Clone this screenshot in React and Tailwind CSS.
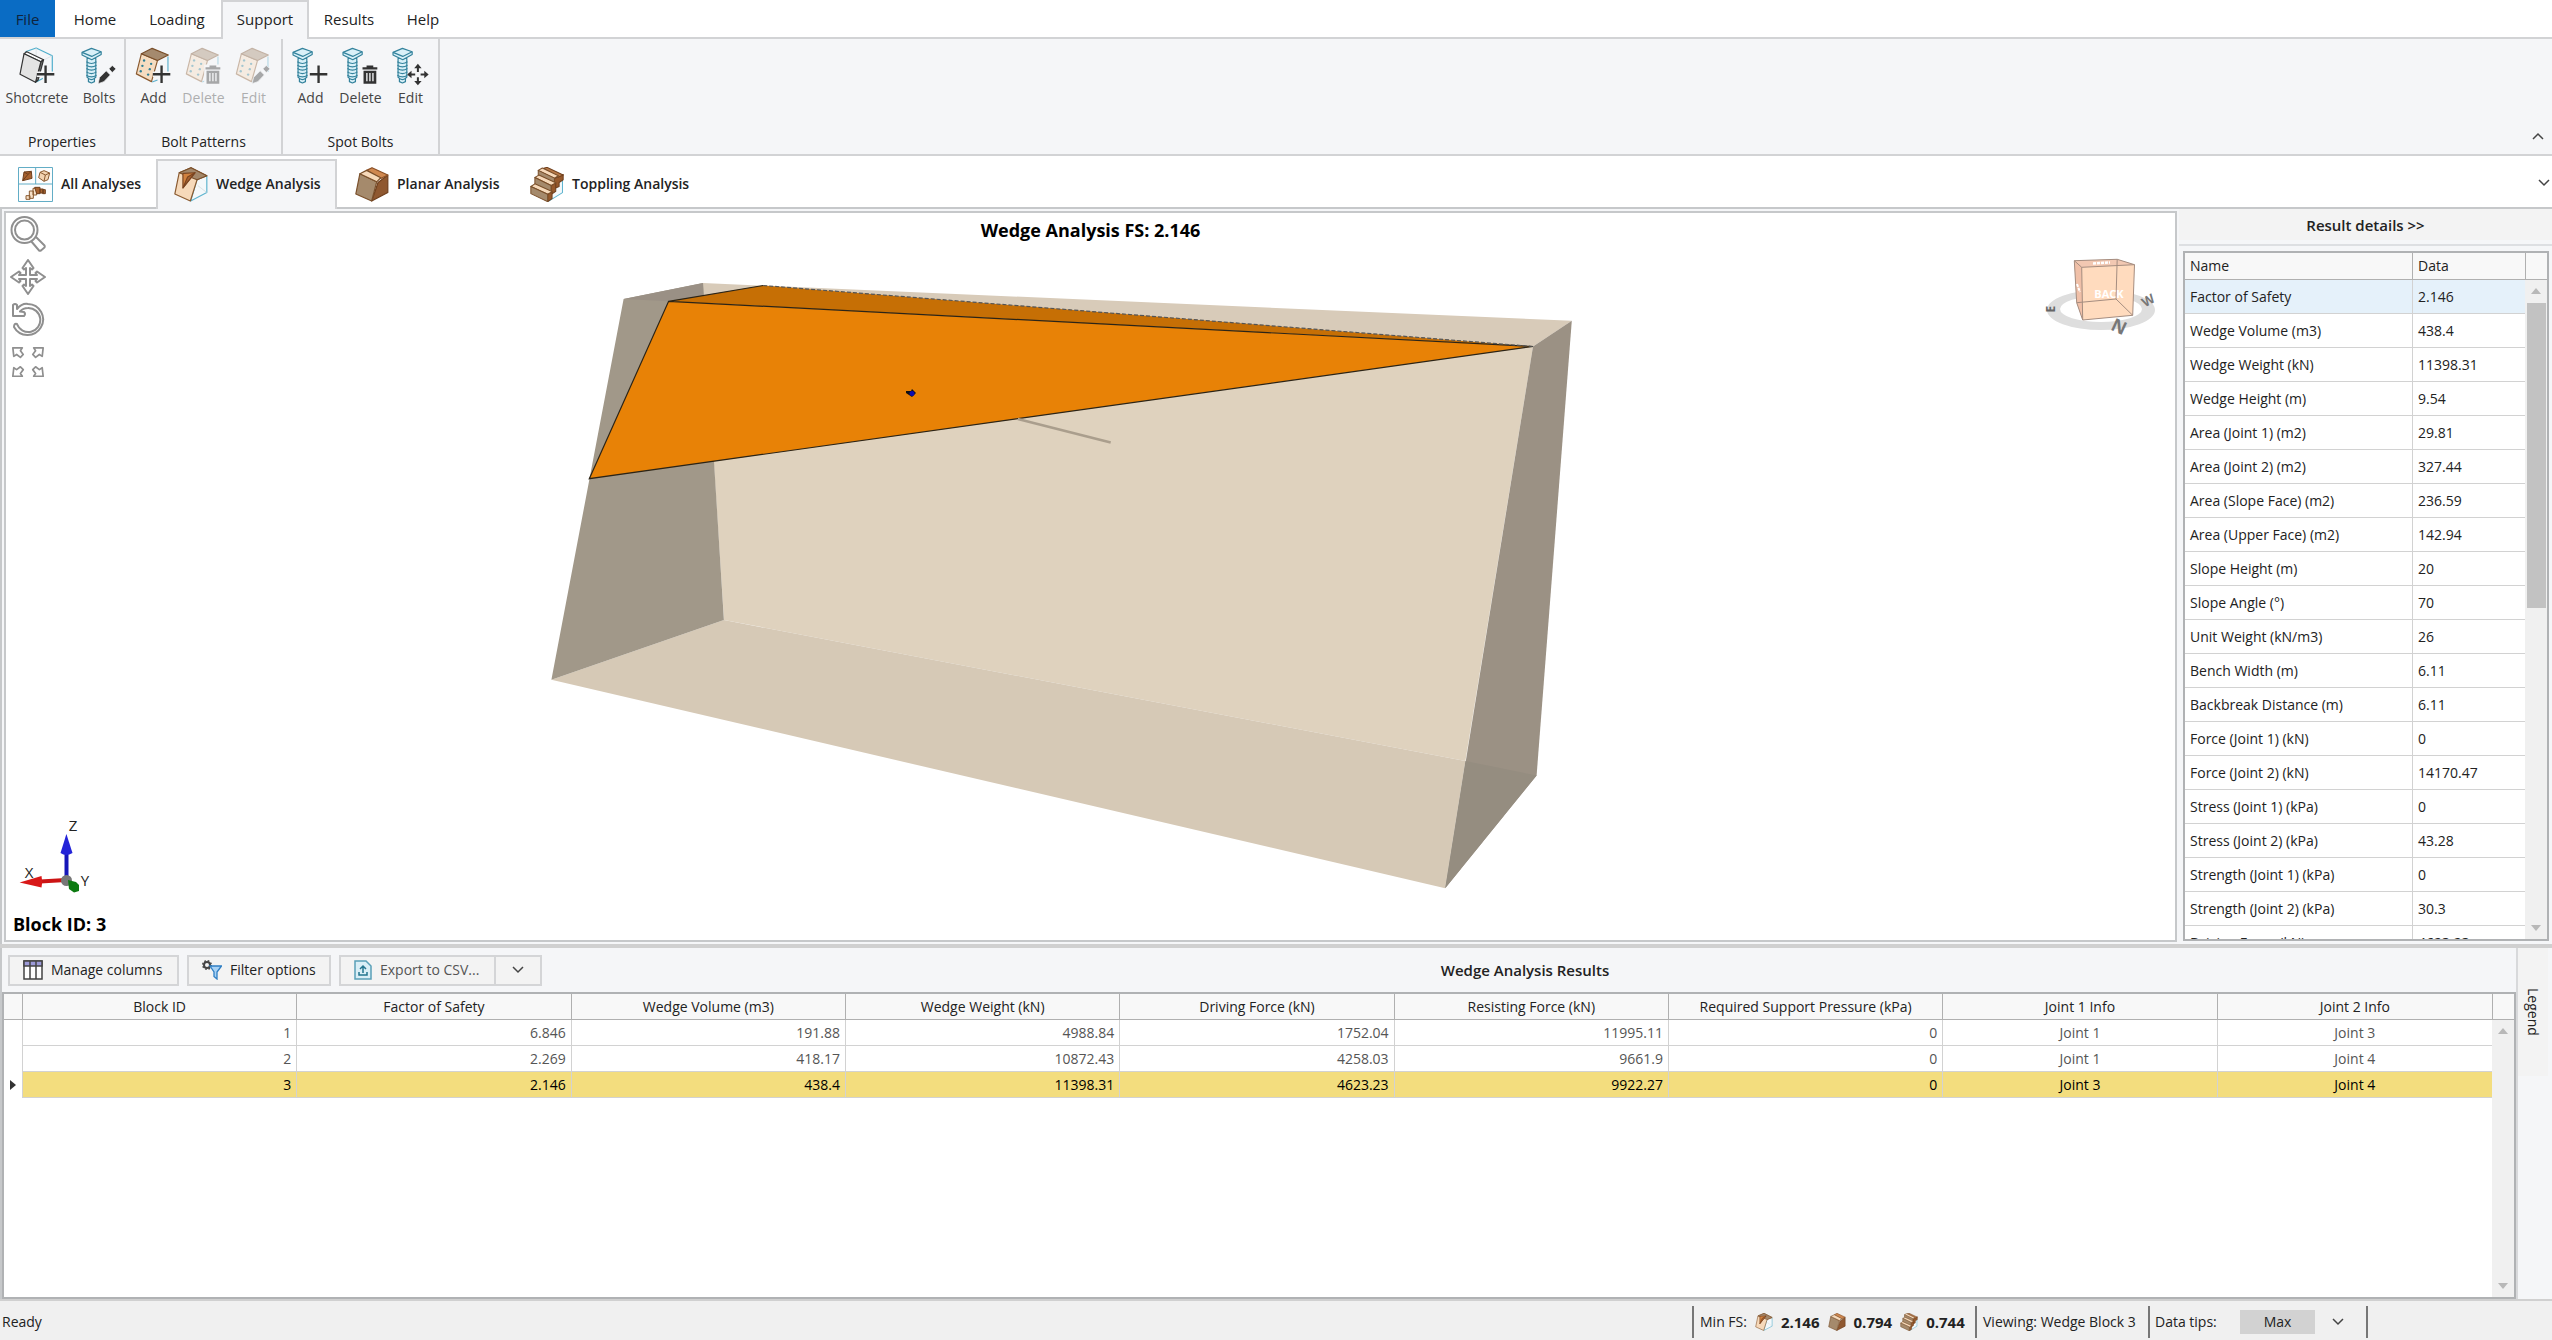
import { useState } from "react";
import clsx from "clsx";

const menuTabs = [
  { label: "Home", width: "w-[76px]" },
  { label: "Loading", width: "w-[88px]" },
  { label: "Support", width: "w-[88px]" },
  { label: "Results", width: "w-[80px]" },
  { label: "Help", width: "w-[68px]" },
];

const details = [
  ["Factor of Safety", "2.146"],
  ["Wedge Volume (m3)", "438.4"],
  ["Wedge Weight (kN)", "11398.31"],
  ["Wedge Height (m)", "9.54"],
  ["Area (Joint 1) (m2)", "29.81"],
  ["Area (Joint 2) (m2)", "327.44"],
  ["Area (Slope Face) (m2)", "236.59"],
  ["Area (Upper Face) (m2)", "142.94"],
  ["Slope Height (m)", "20"],
  ["Slope Angle (°)", "70"],
  ["Unit Weight (kN/m3)", "26"],
  ["Bench Width (m)", "6.11"],
  ["Backbreak Distance (m)", "6.11"],
  ["Force (Joint 1) (kN)", "0"],
  ["Force (Joint 2) (kN)", "14170.47"],
  ["Stress (Joint 1) (kPa)", "0"],
  ["Stress (Joint 2) (kPa)", "43.28"],
  ["Strength (Joint 1) (kPa)", "0"],
  ["Strength (Joint 2) (kPa)", "30.3"],
  ["Driving Force (kN)", "4623.23"],
];

const resultColumns = [
  "Block ID",
  "Factor of Safety",
  "Wedge Volume (m3)",
  "Wedge Weight (kN)",
  "Driving Force (kN)",
  "Resisting Force (kN)",
  "Required Support Pressure (kPa)",
  "Joint 1 Info",
  "Joint 2 Info",
];

const resultRows = [
  ["1", "6.846", "191.88", "4988.84", "1752.04", "11995.11", "0", "Joint 1", "Joint 3"],
  ["2", "2.269", "418.17", "10872.43", "4258.03", "9661.9", "0", "Joint 1", "Joint 4"],
  ["3", "2.146", "438.4", "11398.31", "4623.23", "9922.27", "0", "Joint 3", "Joint 4"],
];

/* ---------- icons ---------- */

function Plus() {
  return (
    <g fill="none">
      <path d="M52 81H104M78 55V107" stroke="#f5f6f8" strokeWidth="16" />
      <path d="M52 81H104M78 55V107" stroke="#333" strokeWidth="7" />
    </g>
  );
}

function Pencil() {
  return (
    <g fill="#333" stroke="#f5f6f8" strokeWidth="2">
      <path d="M50 109L54 91L74 71L86 83L67 103Z" />
      <path d="M82 65L92 55L103 65L92 76Z" />
    </g>
  );
}

function Trash() {
  return (
    <g>
      <path d="M56 52H108V112H56Z" fill="#f5f6f8" />
      <path
        fillRule="evenodd"
        fill="#333"
        d="M60 60H72V55H92V60H104V67H60ZM63 71H101V109H63ZM71 77V102H75V77ZM80 77V102H84V77ZM89 77V102H93V77Z"
      />
    </g>
  );
}

function MoveArrows() {
  return (
    <g>
      <path d="M44 82L76 50L108 82L76 114Z" fill="#f5f6f8" />
      <path
        fill="#333"
        d="M76 50L87 63H79V74H73V63H65ZM76 114L87 101H79V90H73V101H65ZM44 82L57 71V79H68V85H57V93ZM108 82L95 71V79H84V85H95V93Z"
      />
    </g>
  );
}

function Bolt() {
  return (
    <g stroke="#33829c" strokeWidth="3.5" strokeLinejoin="round" fill="#d9f0f8">
      <path d="M17 34H43V90L39 93V103L30 107L21 103V93L17 90Z" />
      <path
        d="M15 44Q30 54 45 44M15 54Q30 64 45 54M15 64Q30 74 45 64M15 74Q30 84 45 74M15 84Q30 94 45 84M21 94Q30 100 39 94"
        fill="none"
      />
      <path d="M2 16L30 4L59 14V22L31 38L2 24Z" />
      <path d="M2 16L31 28L59 14" fill="none" />
    </g>
  );
}

function PatternBlock() {
  return (
    <g strokeLinejoin="round" strokeWidth="3.5">
      <path d="M97 28V74M66 98L50 104" stroke="#5fb0cc" fill="none" />
      <path d="M18 20L66 40L48 103L3 80Z" fill="#f6dcc0" stroke="#8a5a30" />
      <path d="M18 20L50 4L98 24L66 40Z" fill="#a58a6e" stroke="#7a4f2a" />
      <g fill="#2d7f95">
        <circle cx="26" cy="40" r="3.5" />
        <circle cx="47" cy="50" r="3.5" />
        <circle cx="21" cy="56" r="3.5" />
        <circle cx="43" cy="66" r="3.5" />
        <circle cx="16" cy="72" r="3.5" />
        <circle cx="38" cy="82" r="3.5" />
      </g>
    </g>
  );
}

function ShotcreteBlock() {
  return (
    <g strokeLinejoin="round" strokeWidth="3.5">
      <path d="M18 14L50 3L98 26V78L50 104" stroke="#4faecb" fill="none" />
      <path d="M50 3V48M98 26L70 40M50 48L90 72" stroke="#d5dde2" strokeWidth="2" fill="none" />
      <path d="M14 20L22 14L72 38L64 44Z" fill="#fff" stroke="#333" />
      <path d="M64 44L72 38L56 98L48 105Z" fill="#777" stroke="#333" />
      <path d="M14 20L64 44L48 105L2 81Z" fill="#e3e3e3" stroke="#333" />
    </g>
  );
}

function RibbonIcon({ children }) {
  return (
    <svg viewBox="-1 0 110 116" className="h-[39px] w-[37px]">
      {children}
    </svg>
  );
}

function WedgeIcon({ className }) {
  return (
    <svg viewBox="0 0 100 104" className={className} strokeLinejoin="round" strokeWidth="3.5">
      <path d="M97 27V76L49 101L70 30" fill="#f4f8fa" stroke="#5fb4cf" />
      <path d="M70 55L97 76" stroke="#ccd6da" strokeWidth="2" />
      <path d="M15 17L50 2L97 26L68 38L48 101L2 80Z" fill="#f6d9ba" stroke="#8a5a30" />
      <path d="M15 17L50 2L97 26L68 38Z" fill="#a3876a" stroke="#7a4f2a" />
      <path d="M26 19L62 17L26 62Z" fill="#d1813f" stroke="#7a4420" />
      <path d="M62 17L26 62L40 30Z" fill="#a8622f" stroke="#7a4420" />
    </svg>
  );
}

function PlanarIcon({ className }) {
  return (
    <svg viewBox="0 0 100 104" className={className} strokeLinejoin="round" strokeWidth="3.5">
      <path d="M68 46L97 24V76L49 101Z" fill="#8f5830" stroke="#6e3f1d" />
      <path d="M14 20L64 44L49 101L2 80Z" fill="#a58a6c" stroke="#7a4f2a" />
      <path d="M34 10L50 2L97 24L76 34Z" fill="#cf8850" stroke="#8a4f25" />
      <path d="M14 20L34 10L76 32L64 44Z" fill="#f6d9ba" stroke="#7a4f2a" />
    </svg>
  );
}

function TopplingIcon({ className }) {
  return (
    <svg viewBox="0 0 100 104" className={className} strokeLinejoin="round" strokeWidth="3">
      <path d="M96 34V76L54 102" fill="#f4f8fa" stroke="#5fb4cf" />
      <path d="M72 34L98 22V38L86 46V58L72 64Z" fill="#96592c" stroke="#6e3f1d" />
      <path d="M40 4L50 1L98 24L84 30Z" fill="#b87a48" stroke="#6e3f1d" />
      <path d="M24 10L36 3L84 26L72 33Z" fill="#f6d9ba" stroke="#7a4f2a" />
      <path d="M24 10L72 33V52L24 28Z" fill="#a58a6c" stroke="#7a4f2a" />
      <path d="M62 55L76 47V72L62 82Z" fill="#96592c" stroke="#6e3f1d" />
      <path d="M14 31L26 24L76 47L62 55Z" fill="#f6d9ba" stroke="#7a4f2a" />
      <path d="M14 31L62 55V78L14 54Z" fill="#a58a6c" stroke="#7a4f2a" />
      <path d="M52 81L65 73V94L52 103Z" fill="#96592c" stroke="#6e3f1d" />
      <path d="M2 58L14 50L65 73L52 81Z" fill="#f6d9ba" stroke="#7a4f2a" />
      <path d="M2 58L52 81V103L2 79Z" fill="#a58a6c" stroke="#7a4f2a" />
    </svg>
  );
}

function AllAnalysesIcon() {
  return (
    <svg viewBox="0 0 105 105" className="size-[35px]" strokeLinejoin="round" strokeWidth="3">
      <path d="M1.5 1.5H103.5V103.5H1.5ZM1.5 51H103.5M53 1.5V51" fill="#fdfdfd" stroke="#62adc6" />
      <path d="M18 15L40 13L42 34L14 41Z" fill="#a8622f" stroke="#6e3f1d" />
      <path d="M18 15L30 22L14 41M30 22L40 13" fill="none" stroke="#6e3f1d" />
      <path d="M66 16L78 11L95 18L90 38L78 43L62 32Z" fill="#f3d4b2" stroke="#8a5a30" />
      <path d="M66 16L82 24L78 43M82 24L95 18" fill="none" stroke="#8a5a30" />
      <path d="M24 86H36V97H24ZM34 72H46V94H34ZM45 64H56V84H45Z" fill="#f6e0c8" stroke="#8a5a30" />
      <path d="M50 61H66V80H56ZM66 66H76V78H66ZM74 68H82V80H74Z" fill="#a8622f" stroke="#6e3f1d" />
    </svg>
  );
}

function ZoomTool() {
  return (
    <svg viewBox="0 0 36 36" className="size-9" fill="none" stroke="#8f8f8f" strokeWidth="2">
      <circle cx="14.5" cy="14" r="13" />
      <circle cx="14.5" cy="14" r="9.5" />
      <path d="M21 25L29 34.500Q30 35 31 34.500L34.500 31.500Q35 30 34.500 29.500L25.500 20.500" />
    </svg>
  );
}

function PanTool() {
  return (
    <svg viewBox="0 0 36 36" className="size-9" fill="none" stroke="#8f8f8f" strokeWidth="2" strokeLinejoin="round">
      <path d="M18 1L23.500 9L22 10.500L20 9V16H27L25.500 14L27 12.500L35 18L27 23.500L25.500 22L27 20H20V27L22 25.500L23.500 27L18 35L12.500 27L14 25.500L16 27V20H9L10.500 22L9 23.500L1 18L9 12.500L10.500 14L9 16H16V9L14 10.500L12.500 9Z" />
    </svg>
  );
}

function ResetTool() {
  return (
    <svg viewBox="0 0 36 36" className="size-9" fill="none" stroke="#8f8f8f" strokeWidth="2" strokeLinejoin="round">
      <path d="M3 14V3Q5 1 7 3V7Q12 1 18 2A15.500 15.500 0 1 1 4 25Q4 21 7 22A12 12 0 1 0 18 6Q13 6 10 9.500L14 10Q16 12 14 14Z" />
    </svg>
  );
}

function FitTool() {
  return (
    <svg viewBox="-1 0 38 38" className="size-9" fill="none" stroke="#8f8f8f" strokeWidth="1.8" strokeLinejoin="round">
      <path d="M2 3H12L10 6L13 10L10 13L6 10L3 12Z" />
      <path d="M34 3H24L26 6L23 10L26 13L30 10L33 12Z" />
      <path d="M2 33H12L10 30L13 26L10 23L6 26L3 24Z" />
      <path d="M34 33H24L26 30L23 26L26 23L30 26L33 24Z" />
    </svg>
  );
}

function Chevron({ up }) {
  return (
    <svg viewBox="0 0 12 8" className={clsx("h-2 w-3", up && "rotate-180")} fill="none" stroke="#444" strokeWidth="1.5">
      <path d="M1 1L6 6L11 1" />
    </svg>
  );
}

function Triangle({ up }) {
  return (
    <svg viewBox="0 0 10 6" className={clsx("h-[6px] w-[10px]", !up && "rotate-180")} fill="#b8b8b8">
      <path d="M5 0L10 6H0Z" />
    </svg>
  );
}

/* ---------- ribbon ---------- */

function RibbonButton({ label, disabled, width = "w-[50px]", children }) {
  return (
    <button
      disabled={disabled}
      className={clsx("flex flex-col items-center gap-[2px] whitespace-nowrap text-[#444]", width, disabled && "opacity-40")}
    >
      <RibbonIcon>{children}</RibbonIcon>
      <span>{label}</span>
    </button>
  );
}

function RibbonGroup({ title, width, children }) {
  return (
    <section className={clsx("flex flex-col justify-between border-r-2 border-[#d2d3d5] pt-[8px]", width)}>
      <div className="flex justify-center">{children}</div>
      <h2 className="pb-[2px] text-center">{title}</h2>
    </section>
  );
}

/* ---------- 3D view ---------- */

function Scene() {
  return (
    <svg viewBox="6 213 2169 727" className="absolute inset-0 h-full w-full">
      {/* slope block */}
      <path d="M703 283L1571.800 320.800L1533 346.500L703 300Z" fill="#d8cbb9" />
      <path d="M668.600 301.300L1533 346.500L1465.400 761L724 620L703 295Z" fill="#dfd2be" />
      <path d="M551.400 679.700L723.900 620L1465.400 761L1445.200 888.200Z" fill="#d6c9b6" />
      <path d="M623.600 299L703 283L703.600 295L723.900 620L551.400 679.700Z" fill="#a19889" />
      <path d="M623.600 299L703 283L703.600 295L668.600 301.300Z" fill="#9a9085" />
      <path d="M1571.800 320.800L1536.600 775.500L1445.200 888.200L1533 346.500Z" fill="#9b9184" />
      <path d="M1465.400 761L1536.600 775.500L1445.200 888.200Z" fill="#958d80" />

      {/* wedge */}
      <path d="M668.600 301.300L763.200 285.500L1533 346.500Z" fill="#c66f05" />
      <path d="M668.600 301.300L1533 346.500L589.300 478.700Z" fill="#e88206" />
      <g fill="none" stroke="#2b2417" strokeWidth="1.2">
        <path d="M668.600 301.300L1533 346.500L589.300 478.700ZM668.600 301.300L763.200 285.500" />
        <path d="M763.200 285.500L1533 346.500" strokeDasharray="4 2" stroke="#555" />
      </g>
      <path d="M1017.800 419L1110.700 442.500" stroke="#aa9e8d" strokeWidth="2.500" />
      <path d="M906 391L911 391L912 389L916 393L912 397L906 393Z" fill="#101010" />
      <circle cx="912" cy="393.500" r="2.500" fill="#0c0cb0" />

      {/* view cube */}
      <path
        fillRule="evenodd"
        fill="#dedede"
        d="M2047 310A54 20 0 1 1 2155 310A54 20 0 1 1 2047 310ZM2060 309A41 13 0 1 0 2142 309A41 13 0 1 0 2060 309Z"
      />
      <path d="M2074.300 260.700L2117.200 259.300L2134.500 264.700L2132.700 315.300L2082.700 320L2076.700 302.700Z" fill="#ffdbbe" />
      <path d="M2074.300 260.700L2117.200 259.300L2134.500 264.700L2081.700 267.300Z" fill="#f2c8b2" />
      <path d="M2074.300 260.700L2081.700 267.300L2082.700 320L2076.700 302.700Z" fill="#f0c0a8" />
      <g fill="none" stroke="#a58d80" strokeWidth="1">
        <path d="M2074.300 260.700L2117.200 259.300L2134.500 264.700L2132.700 315.300L2082.700 320L2076.700 302.700Z" />
        <path d="M2074.300 260.700L2081.700 267.300L2134.500 264.700M2081.700 267.300L2082.700 320" />
        <path d="M2117.200 259.300L2116 299L2076.700 302.700M2116 299L2132.700 315.300" />
      </g>
      <path d="M2093 263.500L2110 262.500" stroke="#fff" strokeWidth="2.500" strokeDasharray="3 1" />
      <path d="M2077 284L2080 292" stroke="#fff" strokeWidth="2" strokeDasharray="3 1" />
      <text x="2109" y="298" fontSize="11" fontWeight="700" fill="#fff" textAnchor="middle">BACK</text>
      <text x="2119" y="333" fontSize="18" fontWeight="700" fill="#777" textAnchor="middle" transform="rotate(25 2119 327)">N</text>
      <text x="2051" y="313" fontSize="12" fontWeight="700" fill="#666" textAnchor="middle" transform="rotate(-90 2051 309)">E</text>
      <text x="2148" y="305" fontSize="13" fontWeight="700" fill="#777" textAnchor="middle" transform="rotate(-30 2148 300)">W</text>

      {/* axes */}
      <path d="M66.500 881V853" stroke="#1616b8" strokeWidth="4" />
      <path d="M66.400 834L72.500 853Q66 857 60.500 853Z" fill="#2424d8" />
      <path d="M66 880L40 881.500" stroke="#cc1414" strokeWidth="4" />
      <path d="M19.600 882.500L41.500 876Q43 882 41.500 887.500Z" fill="#d81818" />
      <circle cx="66.500" cy="880.500" r="5.500" fill="#777" />
      <path d="M68 880L76 882L79 885V891L74 892.500L69 889Z" fill="#0c7a10" />
      <g fontSize="15" fill="#222" textAnchor="middle">
        <text x="73" y="831">Z</text>
        <text x="29" y="878">X</text>
        <text x="85" y="886">Y</text>
      </g>
    </svg>
  );
}

function ScrollBar({ header, thumb }) {
  return (
    <div className="flex w-[22px] shrink-0 flex-col">
      <div className={clsx("shrink-0 border-b border-l border-[#b0b0b0] bg-[#f8f8f8]", header)} />
      <div className="flex flex-1 flex-col items-center bg-[#f0f0f0] py-[8px]">
        <Triangle up />
        {thumb && <div className="mt-[9px] h-[305px] w-[19px] bg-[#c2c2c2]" />}
        <div className="mt-auto">
          <Triangle />
        </div>
      </div>
    </div>
  );
}

function DetailsPanel() {
  return (
    <aside className="flex w-[373px] shrink-0 flex-col">
      <button className="h-[31px] bg-[#f3f3f3] text-center text-[15px] font-semibold">Result details &gt;&gt;</button>
      <div className="mt-[4px] border-t-2 border-[#dddfe2]" />
      <div className="mt-[5px] mr-[3px] mb-[3px] ml-[4px] flex min-h-0 flex-1 border-2 border-[#b0b2b4] bg-white">
        <div className="min-w-0 flex-1 overflow-hidden">
          <table className="w-full table-fixed border-separate border-spacing-0 text-left">
            <thead className="bg-[#f8f8f8]">
              <tr className="h-[27px]">
                <th className="w-[228px] border-r border-b border-[#b0b0b0] px-[5px] py-0 font-normal">Name</th>
                <th className="border-b border-[#b0b0b0] px-[5px] py-0 font-normal">Data</th>
              </tr>
            </thead>
            <tbody>
              {details.map(([name, value], i) => (
                <tr key={name} className={clsx("h-[34px]", i === 0 && "bg-[#e5f1fa]")}>
                  <td className="border-r border-b border-[#d2d2d2] px-[5px] py-0">{name}</td>
                  <td className="border-b border-[#d2d2d2] px-[5px] py-0">{value}</td>
                </tr>
              ))}
            </tbody>
          </table>
        </div>
        <ScrollBar header="h-[27px]" thumb />
      </div>
    </aside>
  );
}

function ResultsTable({ selected, onSelect }) {
  return (
    <div className="flex min-h-0 flex-1 border-2 border-[#b0b2b4] bg-white">
      <div className="min-w-0 flex-1">
        <table className="w-full table-fixed border-separate border-spacing-0">
          <thead className="bg-[#f8f8f8]">
            <tr className="h-[26px]">
              <th className="w-[19px] border-r border-b border-[#b0b0b0]" />
              {resultColumns.map((c) => (
                <th key={c} className="border-r border-b border-[#b0b0b0] p-0 font-normal last:border-r-0">
                  {c}
                </th>
              ))}
            </tr>
          </thead>
          <tbody>
            {resultRows.map((row) => {
              const active = row[0] === selected;
              return (
                <tr key={row[0]} onClick={() => onSelect(row[0])} className={active ? "text-black" : "text-[#555]"}>
                  <td className="h-[26px] border-r border-[#d2d2d2] p-0">
                    {active && (
                      <svg viewBox="0 0 6 10" className="ml-[6px] h-[10px] w-[6px]" fill="#333">
                        <path d="M0 0L6 5L0 10Z" />
                      </svg>
                    )}
                  </td>
                  {row.map((cell, i) => (
                    <td
                      key={i}
                      className={clsx(
                        "h-[26px] border-r border-b border-[#d2d2d2] px-[5px] py-0 last:border-r-0",
                        i > 6 ? "text-center" : "text-right",
                        active && "bg-[#f3dd7e]"
                      )}
                    >
                      {cell}
                    </td>
                  ))}
                </tr>
              );
            })}
          </tbody>
        </table>
      </div>
      <ScrollBar header="h-[26px]" />
    </div>
  );
}

export default function App() {
  const [tab, setTab] = useState("Support");
  const [analysis, setAnalysis] = useState("Wedge Analysis");
  const [selected, setSelected] = useState("3");

  const analyses = [
    { label: "All Analyses", width: "w-[156px]", icon: <AllAnalysesIcon /> },
    { label: "Wedge Analysis", width: "w-[181px]", icon: <WedgeIcon className="h-[35px] w-[34px]" /> },
    { label: "Planar Analysis", width: "w-[175px]", icon: <PlanarIcon className="h-[35px] w-[34px]" /> },
    { label: "Toppling Analysis", width: "w-[200px]", icon: <TopplingIcon className="h-[35px] w-[34px]" /> },
  ];

  return (
    <div className="flex h-screen flex-col overflow-hidden bg-[#f5f6f8] font-['Open_Sans','Noto_Sans',sans-serif] text-[14px] leading-[20px] text-[#222]">
      {/* Menu tabs */}
      <nav className="flex h-[39px] shrink-0 border-b-2 border-[#d2d3d5] bg-white text-[15px]">
        <button className="mr-[2px] w-[55px] bg-[#0a6cc4] text-[#10243c]">File</button>
        {menuTabs.map((t) => (
          <button
            key={t.label}
            onClick={() => setTab(t.label)}
            className={clsx(
              t.width,
              tab === t.label && "-mb-[2px] border-x-2 border-t-2 border-[#d2d3d5] bg-[#f5f6f8] pb-[3px]"
            )}
          >
            {t.label}
          </button>
        ))}
      </nav>

      {/* Ribbon */}
      <div className="flex h-[117px] shrink-0 border-b-2 border-[#d2d3d5]">
        <RibbonGroup title="Properties" width="w-[126px]">
          <RibbonButton label="Shotcrete" width="w-[74px]">
            <ShotcreteBlock />
            <Plus />
          </RibbonButton>
          <RibbonButton label="Bolts">
            <Bolt />
            <Pencil />
          </RibbonButton>
        </RibbonGroup>
        <RibbonGroup title="Bolt Patterns" width="w-[157px]">
          <RibbonButton label="Add">
            <PatternBlock />
            <Plus />
          </RibbonButton>
          <RibbonButton label="Delete" disabled>
            <PatternBlock />
            <Trash />
          </RibbonButton>
          <RibbonButton label="Edit" disabled>
            <PatternBlock />
            <Pencil />
          </RibbonButton>
        </RibbonGroup>
        <RibbonGroup title="Spot Bolts" width="w-[157px]">
          <RibbonButton label="Add">
            <Bolt />
            <Plus />
          </RibbonButton>
          <RibbonButton label="Delete">
            <Bolt />
            <Trash />
          </RibbonButton>
          <RibbonButton label="Edit">
            <Bolt />
            <MoveArrows />
          </RibbonButton>
        </RibbonGroup>
        <button aria-label="Collapse ribbon" className="mt-auto mr-[8px] mb-[14px] ml-auto">
          <Chevron up />
        </button>
      </div>

      {/* Analysis tabs */}
      <div className="flex h-[53px] shrink-0 border-b-2 border-[#c6c8ca] bg-white pt-[3px]">
        {analyses.map((a) => (
          <button
            key={a.label}
            onClick={() => setAnalysis(a.label)}
            className={clsx(
              "-mb-[2px] flex items-center gap-[8px] border-x-2 border-t-2 pb-[2px] pl-[16px] font-semibold whitespace-nowrap",
              a.width,
              analysis === a.label ? "border-[#d2d3d5] bg-[#f5f6f8]" : "border-transparent"
            )}
          >
            {a.icon}
            {a.label}
          </button>
        ))}
        <button aria-label="More tabs" className="mr-[2px] ml-auto">
          <Chevron />
        </button>
      </div>

      {/* View and details */}
      <div className="flex min-h-0 flex-1 border-l-2 border-[#c6c8ca] pl-[2px]">
        <main className="relative mt-[2px] mr-[2px] mb-[2px] flex-1 border-2 border-[#c6c8ca] bg-white">
          <Scene />
          <h1 className="absolute inset-x-0 top-[7px] text-center text-[18px] font-bold text-black">
            Wedge Analysis FS: 2.146
          </h1>
          <div className="absolute top-[3px] left-[4px] flex flex-col gap-[7px]">
            <button aria-label="Zoom"><ZoomTool /></button>
            <button aria-label="Pan"><PanTool /></button>
            <button aria-label="Reset rotation"><ResetTool /></button>
            <button aria-label="Zoom to fit"><FitTool /></button>
          </div>
          <p className="absolute bottom-[6px] left-[7px] text-[18px] font-bold text-black">Block ID: 3</p>
        </main>
        <DetailsPanel />
      </div>

      <div className="h-[4px] shrink-0 bg-[#d0d0d0]" />

      {/* Results */}
      <div className="flex h-[351px] shrink-0">
        <section className="flex min-w-0 flex-1 flex-col border-l-2 border-[#c6c8ca]">
          <div className="flex h-[44px] shrink-0 items-center gap-[8px] pl-[6px] [&_button]:h-[31px] [&_button]:border-2 [&_button]:border-[#d4d5d7] [&_button]:bg-[#f3f3f3]">
            <button className="flex w-[171px] items-center gap-[8px] pl-[13px] whitespace-nowrap">
              <svg viewBox="0 0 20 20" className="size-5" fill="#fff" stroke="#444" strokeWidth="1.5">
                <path d="M1 1H19V19H1Z" />
                <path d="M1 1H19V6H1Z" fill="#9c9ad8" />
                <path d="M7 1V19M13 1V19" />
              </svg>
              Manage columns
            </button>
            <button className="flex w-[144px] items-center gap-[8px] pl-[13px] whitespace-nowrap">
              <svg viewBox="0 0 20 20" className="size-5">
                <circle cx="5" cy="5" r="3" fill="none" stroke="#444" strokeWidth="2" />
                <circle cx="5" cy="5" r="4.300" fill="none" stroke="#444" strokeWidth="1.400" strokeDasharray="1.700 1.700" />
                <path d="M8 6H19.500L15 12V19L12 16.500V12Z" fill="#a8d2f5" stroke="#2f7fc4" strokeWidth="1.300" />
              </svg>
              Filter options
            </button>
            <div className="flex">
              <button className="flex w-[157px] items-center gap-[8px] pl-[13px] whitespace-nowrap text-[#555]">
                <svg viewBox="0 0 18 20" className="h-5 w-[18px]" strokeWidth="1.500">
                  <path d="M1 1H12L17 6V19H1Z" fill="#d9eef6" stroke="#5aa0b8" />
                  <path d="M9 13V6M6 9L9 6L12 9M5 12V15H13V12" fill="none" stroke="#23758f" />
                </svg>
                Export to CSV...
              </button>
              <button aria-label="Export options" className="-ml-[2px] flex w-[48px] items-center justify-center">
                <Chevron />
              </button>
            </div>
            <h2 className="flex-1 pr-[16px] text-center text-[15px] font-semibold">Wedge Analysis Results</h2>
          </div>
          <ResultsTable selected={selected} onSelect={setSelected} />
        </section>
        <div className="w-[36px] shrink-0 border-l-2 border-[#d8d9db]">
          <button className="flex h-[128px] w-[30px] items-center justify-center bg-[#f3f3f3] [writing-mode:vertical-rl]">
            Legend
          </button>
        </div>
      </div>

      {/* Status bar */}
      <footer className="flex h-[41px] shrink-0 items-center border-t-2 border-[#d0d0d0] bg-[#f0f0f0] pt-[3px] pr-[184px]">
        <span className="ml-[2px]">Ready</span>
        <div className="ml-auto flex h-[32px] w-[283px] items-center gap-[8px] border-l-2 border-[#777] pl-[6px] whitespace-nowrap">
          Min FS:
          <WedgeIcon className="h-[18px] w-[18px]" />
          <b className="text-[15px] font-bold">2.146</b>
          <PlanarIcon className="h-[18px] w-[18px]" />
          <b className="text-[15px] font-bold">0.794</b>
          <TopplingIcon className="h-[18px] w-[18px]" />
          <b className="text-[15px] font-bold">0.744</b>
        </div>
        <div className="flex h-[32px] w-[173px] items-center border-l-2 border-[#777] pl-[6px] whitespace-nowrap">
          Viewing: Wedge Block 3
        </div>
        <div className="flex h-[32px] w-[220px] items-center border-x-2 border-[#777] pl-[5px]">
          <span id="tips" className="w-[85px]">Data tips:</span>
          <button aria-labelledby="tips" className="h-[24px] w-[75px] bg-[#d2d2d2]">Max</button>
          <button aria-label="Data tip options" className="ml-[17px]">
            <Chevron />
          </button>
        </div>
      </footer>
    </div>
  );
}
